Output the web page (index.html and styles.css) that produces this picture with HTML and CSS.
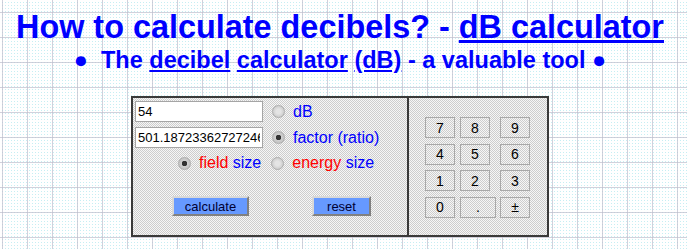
FILE: index.html
```html
<!DOCTYPE html>
<html lang="en">
<head>
    <meta charset="UTF-8">
    <meta name="viewport" content="width=device-width, initial-scale=1.0">
    <title>Decibel Calculator</title>
    <link rel="stylesheet" href="styles.css">
</head>
<body>

    <h1 class="title">How to calculate decibels? - <a href="#">dB calculator</a></h1>
    <h2 class="subtitle">●&nbsp;&nbsp;The <a href="#">decibel</a> <a href="#">calculator</a> <a href="#">(dB)</a> - a valuable tool&nbsp;●</h2>

    <div class="calc">
        <div class="calc-main">
            <div class="field-row">
                <input type="text" class="num" id="db" value="54">
                <label class="opt"><input type="radio" name="mode" value="db"><span>dB</span></label>
            </div>
            <div class="field-row">
                <input type="text" class="num" id="factor" value="501.18723362727246">
                <label class="opt"><input type="radio" name="mode" value="factor" checked><span>factor (ratio)</span></label>
            </div>
            <div class="size-row">
                <label class="opt"><input type="radio" name="size" value="field" checked><span><span class="red">field</span> size</span></label>
                <label class="opt"><input type="radio" name="size" value="energy"><span><span class="red">energy</span> size</span></label>
            </div>
            <div class="btn-row">
                <button class="action calc-btn">calculate</button>
                <button class="action reset-btn">reset</button>
            </div>
        </div>

        <div class="keypad">
            <button class="key">7</button>
            <button class="key">8</button>
            <button class="key">9</button>
            <button class="key">4</button>
            <button class="key">5</button>
            <button class="key">6</button>
            <button class="key">1</button>
            <button class="key">2</button>
            <button class="key">3</button>
            <button class="key">0</button>
            <button class="key dot">.</button>
            <button class="key">±</button>
        </div>
    </div>

</body>
</html>
```

FILE: styles.css
```css
body {
    margin: 8px 15px 8px 8px;
    font-family: "Liberation Sans", Arial, sans-serif;
    color: #0000ff;
    background-color: #ffffff;
    background-image:
        linear-gradient(90deg, rgba(190, 190, 205, 0.7) 1px, transparent 1px),
        linear-gradient(rgba(190, 190, 205, 0.7) 1px, transparent 1px),
        linear-gradient(90deg, #ffffff 2px, transparent 2px),
        linear-gradient(#ffffff 2px, #c6eef3 2px);
    background-size: 25px 25px, 25px 25px, 3px 3px, 3px 3px;
    background-position: 2px 0, 0 12px, 0 0, 0 0;
}

a {
    color: #0000ff;
}

.title {
    margin: 1px 0 0;
    font-size: 32.4px;
    line-height: 36px;
    text-align: center;
    white-space: nowrap;
}

.subtitle {
    margin: 2px 0 0;
    font-size: 23.5px;
    line-height: 26px;
    text-align: center;
}

.calc {
    display: flex;
    width: 414px;
    height: 137px;
    margin: 23px 0 0 123px;
    border: 2px solid #3a3a3a;
    background: repeating-conic-gradient(#cdcdcd 0 25%, #f6f6f6 0 50%) 0 0 / 2px 2px;
}

.calc-main {
    width: 274px;
    padding: 3px 0 0 2px;
    box-sizing: border-box;
}

.field-row {
    display: flex;
    align-items: center;
    margin-bottom: 5px;
}

.num {
    width: 128px;
    height: 21px;
    box-sizing: border-box;
    margin: 0 9px 0 0;
    padding: 0 2px;
    border: 1px solid #a5a5a5;
    font-family: "Liberation Sans", Arial, sans-serif;
    font-size: 13px;
    color: #000000;
    background: #ffffff;
}

.opt {
    display: flex;
    align-items: center;
    font-size: 16px;
    color: #0000ff;
    white-space: nowrap;
}

.opt input {
    appearance: none;
    box-sizing: border-box;
    width: 13px;
    height: 13px;
    margin: 0 8px 0 0;
    border: 1px solid #adadad;
    border-radius: 50%;
    background: radial-gradient(circle, #e4e4e4 30%, #bdbdbd 100%);
}

.opt input:checked {
    background: radial-gradient(circle, #333333 0 2.5px, #d0d0d0 3px, #b8b8b8 100%);
}

.red {
    color: #ff0000;
}

.size-row {
    display: flex;
    gap: 10px;
    padding-left: 43px;
    margin-top: 6px;
}

.btn-row {
    display: flex;
    gap: 63px;
    padding-left: 37px;
    margin-top: 24px;
}

.action {
    height: 20px;
    padding: 0;
    border: 2px solid;
    border-color: #d8d8d8 #808080 #808080 #d8d8d8;
    background: #6699ff;
    color: #000033;
    font-family: "Liberation Sans", Arial, sans-serif;
    font-size: 13px;
}

.calc-btn {
    width: 77px;
}

.reset-btn {
    width: 59px;
}

.keypad {
    display: grid;
    grid-template-columns: 30px 35px 30px;
    grid-auto-rows: 21px;
    gap: 5.5px 5px;
    align-content: start;
    padding: 19px 0 0 16px;
    border-left: 2px solid #3a3a3a;
}

.key {
    width: 30px;
    padding: 0;
    border: 1px solid #a8a8a8;
    background: transparent;
    color: #000000;
    font-family: "Liberation Sans", Arial, sans-serif;
    font-size: 14px;
}

.key.dot {
    width: 36px;
}
```
